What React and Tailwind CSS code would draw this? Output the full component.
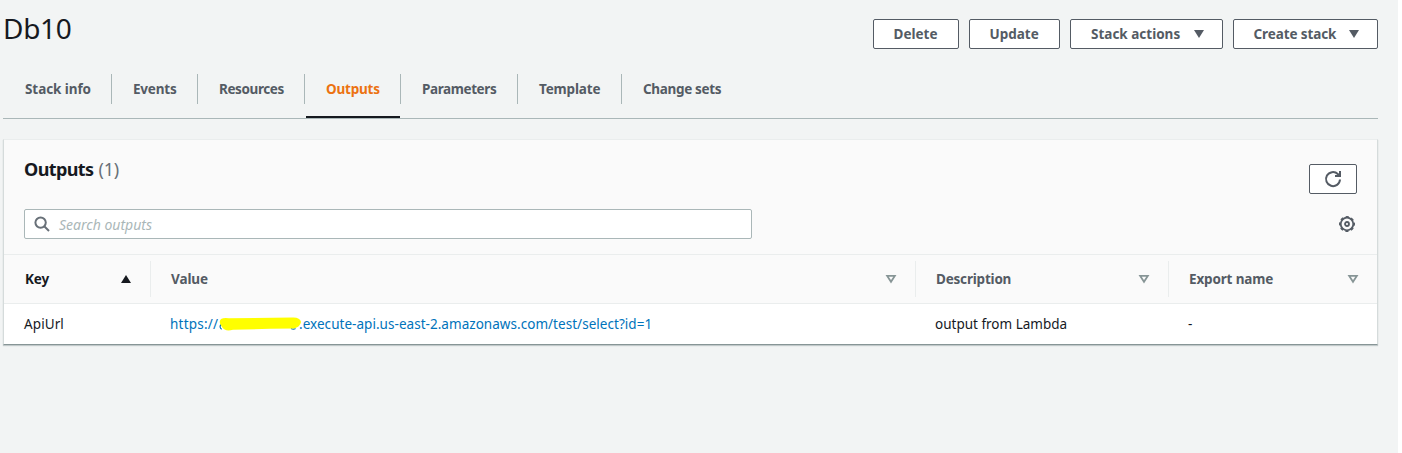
import React from "react";

const tabs = [
  { label: "Stack info", box: "w-[109px]", track: "tracking-[-0.08px]" },
  { label: "Events", box: "w-[86px]", track: "tracking-[-0.2px]" },
  { label: "Resources", box: "w-[107px]", track: "tracking-[-0.4px]" },
  { label: "Outputs", box: "w-[96px]", track: "tracking-[-0.2px]", active: true },
  { label: "Parameters", box: "w-[117px]", track: "tracking-[-0.4px]" },
  { label: "Template", box: "w-[104px]", track: "tracking-[-0.15px]" },
  { label: "Change sets", box: "w-[120px]", track: "tracking-[-0.33px]" },
];

const actions = [
  { label: "Delete", box: "w-[86px] pl-[19.5px]" },
  { label: "Update", box: "w-[91px] pl-[19.5px]" },
  { label: "Stack actions", box: "w-[153px] pl-[20px]", menu: true },
  { label: "Create stack", box: "w-[145px] pl-[19.5px] tracking-[-0.1px]", menu: true },
];

function Sort() {
  return (
    <svg width="12" height="10" viewBox="0 0 12 10" className="shrink-0">
      <path d="M2.200 1.900h7.600L6 7.800z" fill="none" stroke="#879596" strokeWidth="1.800" />
    </svg>
  );
}

function Header({ label, box, track, last }) {
  return (
    <div className={`flex h-9 items-center justify-between pr-[18px] pl-5 ${last ? "" : "border-r border-[#eaeded]"} ${box}`}>
      <span className={`font-bold text-[#545b64] ${track}`}>{label}</span>
      <Sort />
    </div>
  );
}

export default function App() {
  return (
    <div className="h-[453px] w-[1402px] overflow-hidden bg-white font-['Noto_Sans',sans-serif] text-[13.5px] leading-5 text-[#16191f]">
      <div className="h-full w-[1398px] bg-[#f2f4f4] pl-[3px] pr-5">
        <div className="flex h-[74px] items-start justify-between">
          <h1 className="pt-[10px] text-[28px] leading-9 tracking-[-0.3px]">Db10</h1>
          <div className="flex gap-[10px] pt-[19px]">
            {actions.map((a) => (
              <button key={a.label} className={`flex h-[30px] items-center rounded-[2px] border border-[#545b64] bg-white font-bold whitespace-nowrap text-[#545b64] ${a.box}`}>
                <span className="flex-1 text-left">{a.label}</span>
                {a.menu && (
                  <svg width="10" height="8" viewBox="0 0 10 8" className="mr-[18px]">
                    <path d="M0 0h10L5 8z" fill="#545b64" />
                  </svg>
                )}
              </button>
            ))}
          </div>
        </div>
        <nav className="flex h-[45px] border-b border-[#aab7b8]">
          {tabs.map((t, i) => (
            <div key={t.label} className={`flex h-11 flex-col justify-between ${t.box}`}>
              <div className={`flex h-[30px] items-center whitespace-nowrap font-bold ${i === 0 ? "pl-[22px]" : "pl-[21px]"} ${i < 6 ? "border-r border-[#aab7b8]" : ""} ${t.active ? "text-[#ec7211]" : "text-[#545b64]"} ${t.track}`}>{t.label}</div>
              {t.active && <div className="mr-px ml-px h-[2px] bg-[#16191f]" />}
            </div>
          ))}
        </nav>
        <section className="mt-5 h-[206px] border border-t-[#eaeded] border-r-[#d5dbdb] border-b-[#879596] border-l-[#d5dbdb] bg-[#fafafa] shadow-[0_1px_1px_rgba(0,28,36,0.2)]">
          <div className="flex h-[69px] items-start justify-between pl-5 pr-5">
            <h2 className="pt-[17px] text-[18px] leading-6 font-bold tracking-[-0.6px]">
              Outputs <span className="ml-px font-normal tracking-[-0.2px] text-[#687078]">(1)</span>
            </h2>
            <button className="mt-6 flex h-[30px] w-12 items-center justify-center rounded-[2px] border border-[#545b64] bg-white">
              <svg width="18" height="18" viewBox="0 0 18 18" fill="none" stroke="#545b64" strokeWidth="2">
                <path d="M16 9.500A7 7 0 1 1 13.800 4L15.800 6M16 1v5h-5" />
              </svg>
            </button>
          </div>
          <div className="flex h-[45px] items-start justify-between pl-5 pr-[22px]">
            <div className="flex h-[30px] w-[728px] items-center gap-[9px] rounded-[2px] border border-[#aab7b8] bg-white pl-[9px]">
              <svg width="16" height="16" viewBox="0 0 16 16" fill="none" stroke="#687078" strokeWidth="2">
                <circle cx="6.6" cy="6.6" r="5.2" />
                <path d="m10.500 10.500 4.500 4.500" />
              </svg>
              <span className="pt-[2px] text-[14px] tracking-[0px] text-[#aab7b8] italic">Search outputs</span>
            </div>
            <svg width="16" height="16" viewBox="0 0 16 16" className="mt-[7px]" fill="none" stroke="#545b64">
              <circle cx="8" cy="8" r="6.300" strokeWidth="1.800" />
              <circle cx="8" cy="8" r="7.300" strokeWidth="1.400" strokeDasharray="3.200 2.533" strokeDashoffset="1.600" />
              <circle cx="8" cy="8" r="2" strokeWidth="1.800" />
            </svg>
          </div>
          <div className="flex h-[50px] items-center border-y border-[#eaeded]">
            <div className="flex h-9 w-[147px] items-center justify-between border-r border-[#eaeded] pr-[19px] pl-[21px]">
              <span className="font-bold tracking-[-0.15px]">Key</span>
              <svg width="10" height="8" viewBox="0 0 10 8"><path d="M0 8h10L5 0z" fill="#16191f" /></svg>
            </div>
            <Header label="Value" box="w-[765px]" track="tracking-[-0.1px]" />
            <Header label="Description" box="w-[253px]" track="tracking-[-0.2px]" />
            <Header label="Export name" box="w-[208px]" track="tracking-[-0.15px]" last />
          </div>
          <div className="flex h-10 items-center bg-white pb-px">
            <div className="w-[146px] pl-5 tracking-[0.1px]">ApiUrl</div>
            <div className="flex w-[765px] items-center pl-5 text-[#0073bb]">
              <span className="w-[48px] tracking-[0.220px]">https://</span>
              <svg width="83" height="16" viewBox="0 0 83 16">
                <path d="M3 8.500q-1 1.200-.9 2.500t1.600 2.200M73 12.500q2.500 1.300 4.500 0" fill="none" stroke="#0073bb" strokeWidth="1.200" />
                <path d="M3 3Q6 1.500 11 2.300L74 1.500Q82 1 83 6Q82 11 76 12.500L52 12.800L15 13.700Q7 16 4 11Q0 6 3 3Z" fill="#ffff00" />
              </svg>
              <span className="-ml-[2px] tracking-[0.040px]">.execute-api.us-east-2.amazonaws.com/test/select?id=1</span>
            </div>
            <div className="w-[253px] pl-5">output from Lambda</div>
            <div className="pl-5">-</div>
          </div>
        </section>
      </div>
    </div>
  );
}
